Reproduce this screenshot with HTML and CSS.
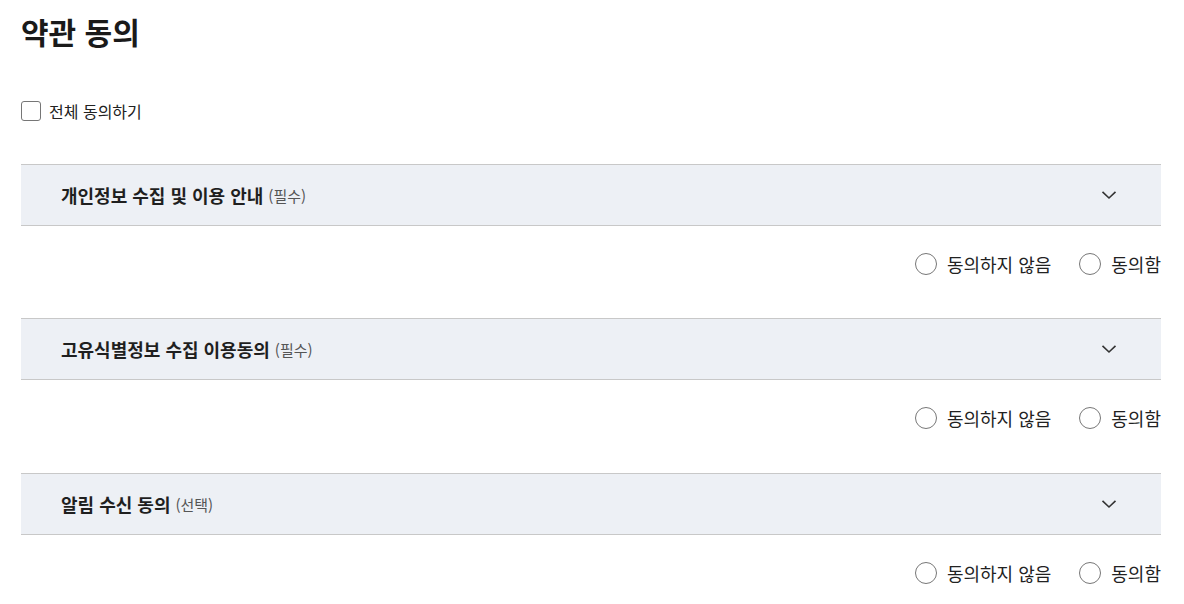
FILE: index.html
```html
<!DOCTYPE html>
<html lang="ko">
<head>
<meta charset="utf-8">
<title>약관 동의</title>
<link rel="stylesheet" href="styles.css">
</head>
<body>
<div class="page">
  <h1 class="title">약관 동의</h1>
  <label class="all-agree">
    <span class="checkbox"></span>
    <span class="all-text">전체 동의하기</span>
  </label>

  <section class="term">
    <div class="term-head">
      <span class="term-name">개인정보 수집 및 이용 안내</span>
      <span class="term-tag">(필수)</span>
      <svg class="chev" width="16" height="10" viewBox="0 0 16 10"><path d="M1.5 1.8 L8 8 L14.5 1.8" fill="none" stroke="#333" stroke-width="1.6"/></svg>
    </div>
    <div class="term-body">
      <label class="radio"><span class="circle"></span><span>동의하지 않음</span></label>
      <label class="radio"><span class="circle"></span><span>동의함</span></label>
    </div>
  </section>

  <section class="term">
    <div class="term-head">
      <span class="term-name">고유식별정보 수집 이용동의</span>
      <span class="term-tag">(필수)</span>
      <svg class="chev" width="16" height="10" viewBox="0 0 16 10"><path d="M1.5 1.8 L8 8 L14.5 1.8" fill="none" stroke="#333" stroke-width="1.6"/></svg>
    </div>
    <div class="term-body">
      <label class="radio"><span class="circle"></span><span>동의하지 않음</span></label>
      <label class="radio"><span class="circle"></span><span>동의함</span></label>
    </div>
  </section>

  <section class="term">
    <div class="term-head">
      <span class="term-name">알림 수신 동의</span>
      <span class="term-tag">(선택)</span>
      <svg class="chev" width="16" height="10" viewBox="0 0 16 10"><path d="M1.5 1.8 L8 8 L14.5 1.8" fill="none" stroke="#333" stroke-width="1.6"/></svg>
    </div>
    <div class="term-body">
      <label class="radio"><span class="circle"></span><span>동의하지 않음</span></label>
      <label class="radio"><span class="circle"></span><span>동의함</span></label>
    </div>
  </section>
</div>
</body>
</html>
```

FILE: styles.css
```css
html, body {
  margin: 0;
  padding: 0;
  background: #fff;
}
body {
  font-family: "Noto Sans CJK KR", "Noto Sans", sans-serif;
  color: #222;
}
.page {
  width: 1140px;
  padding: 11px 0 0 21px;
}
.title {
  margin: 0;
  font-size: 30px;
  font-weight: 700;
  line-height: 40px;
  color: #1a1a1a;
}
.all-agree {
  display: flex;
  align-items: center;
  gap: 8px;
  margin-top: 50px;
  height: 20px;
  font-size: 16px;
}
.checkbox {
  width: 18px;
  height: 18px;
  border: 1px solid #767676;
  border-radius: 3px;
  background: #fff;
}
.all-text {
  line-height: 20px;
}
.term {
  margin-top: 43px;
}
.term + .term {
  margin-top: 0;
}
.term-head {
  display: flex;
  align-items: center;
  height: 60px;
  padding-left: 40px;
  padding-right: 44px;
  border-top: 1px solid #c8c8c8;
  border-bottom: 1px solid #c8c8c8;
  background: #edf0f5;
}
.term-name {
  font-size: 18px;
  font-weight: 700;
  color: #1f1f1f;
}
.term-tag {
  margin-left: 5px;
  font-size: 15px;
  color: #555;
}
.chev {
  margin-left: auto;
}
.term-body {
  display: flex;
  justify-content: flex-end;
  gap: 28px;
  padding-top: 26px;
  height: 92px;
  box-sizing: border-box;
}
.term:nth-of-type(2) .term-body {
  height: 93px;
}
.radio {
  display: flex;
  align-items: center;
  gap: 10px;
  height: 24px;
  font-size: 18px;
  color: #222;
}
.circle {
  width: 20px;
  height: 20px;
  border: 1px solid #777;
  border-radius: 50%;
  background: #fff;
}
```
